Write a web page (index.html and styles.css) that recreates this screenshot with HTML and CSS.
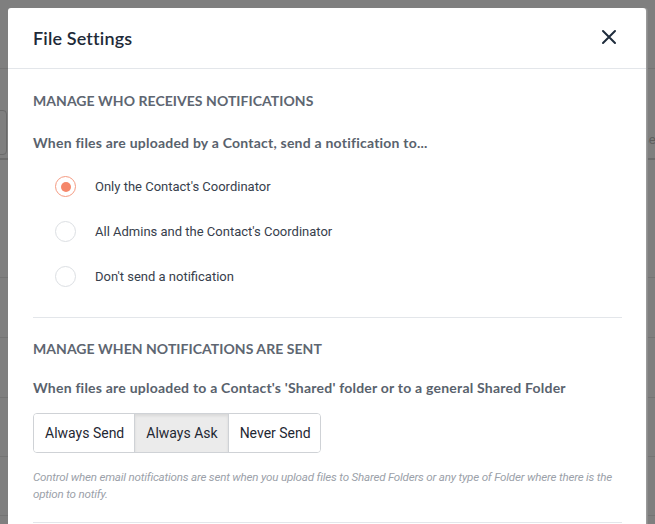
FILE: index.html
```html
<!DOCTYPE html>
<html>
<head>
<meta charset="utf-8">
<link rel="stylesheet" href="styles.css">
</head>
<body>
<div class="backdrop">
  <div class="bg-page">
    <div class="bg-line l1"></div>
    <div class="bg-input"></div>
    <div class="bg-search">Search</div>
    <div class="bg-line l2"></div>
    <div class="bg-line l3"></div>
    <div class="bg-line l4"></div>
    <div class="bg-line l5"></div>
    <div class="bg-line l6"></div>
    <div class="bg-line l7"></div>
  </div>
  <div class="modal">
    <div class="modal-header">
      <h2 class="modal-title">File Settings</h2>
      <button class="close" aria-label="Close">
        <svg width="16" height="16" viewBox="0 0 16 16"><path d="M2 2 L14 14 M14 2 L2 14" stroke="#1f2c3c" stroke-width="2" stroke-linecap="round"/></svg>
      </button>
    </div>
    <div class="modal-body">
      <section class="section">
        <h3 class="section-title">Manage who receives notifications</h3>
        <p class="question">When files are uploaded by a Contact, send a notification to...</p>
        <div class="radios">
          <label class="radio"><span class="dot checked"></span><span>Only the Contact's Coordinator</span></label>
          <label class="radio"><span class="dot"></span><span>All Admins and the Contact's Coordinator</span></label>
          <label class="radio"><span class="dot"></span><span>Don't send a notification</span></label>
        </div>
      </section>
      <section class="section second">
        <h3 class="section-title">Manage when notifications are sent</h3>
        <p class="question">When files are uploaded to a Contact's 'Shared' folder or to a general Shared Folder</p>
        <div class="btn-group">
          <button class="btn">Always Send</button>
          <button class="btn active">Always Ask</button>
          <button class="btn">Never Send</button>
        </div>
        <p class="help">Control when email notifications are sent when you upload files to Shared Folders or any type of Folder where there is the option to notify.</p>
      </section>
    </div>
  </div>
</div>
</body>
</html>
```
FILE: styles.css
```css
* { box-sizing: border-box; }
html, body { margin: 0; padding: 0; height: 100%; overflow: hidden; }
body { font-family: "Open Sans", "Noto Sans", sans-serif; background: #808080; }

.backdrop {
  position: relative;
  width: 655px;
  height: 524px;
  background: #7f7f7f;
  padding: 8px 9px 0 8px;
}
.bg-page { position: absolute; inset: 0; pointer-events: none; }
.bg-line { position: absolute; left: 0; right: 0; height: 1px; background: #747474; }
.bg-line.l1 { top: 68px; }
.bg-line.l2 { top: 158px; height: 2px; background: #6c6c6c; }
.bg-line.l3 { top: 277px; }
.bg-line.l4 { top: 337px; }
.bg-line.l5 { top: 397px; }
.bg-line.l6 { top: 456px; }
.bg-line.l7 { top: 515px; }
.bg-input { position: absolute; left: -10px; top: 110px; width: 17px; height: 45px; border: 1px solid #6a6a6a; border-radius: 4px; }
.bg-search { position: absolute; left: 640px; top: 132px; font: 13px "Liberation Sans", sans-serif; color: #5d5d5d; }

.modal {
  position: relative;
  background: #fff;
  border-radius: 3px 3px 0 0;
  height: 100%;
  box-shadow: 1px 0 0 #9a9a9a, 2px 0 0 #8c8c8c;
}
.modal-header {
  height: 61px;
  border-bottom: 1px solid #e3e6ea;
  display: flex;
  align-items: center;
  justify-content: space-between;
  padding: 0 29px 0 25px;
}
.modal-title {
  margin: 0;
  font-family: "Lato", sans-serif;
  font-size: 18px;
  font-weight: 600;
  color: #1e2a38;
  padding-top: 0;
  letter-spacing: 0.15px;
}
.close { border: 0; background: none; padding: 0; width: 16px; height: 16px; display: flex; margin-top: -2px; }

.modal-body { padding: 0 24px 0 25px; }
.section { padding-top: 24px; }
.section.second {
  border-top: 1px solid #e3e6ea;
  margin-top: 30px;
  padding-top: 23px;
  border-bottom: 1px solid #e3e6ea;
  padding-bottom: 19px;
}
.section-title {
  margin: 0;
  font-family: "Lato", sans-serif;
  font-size: 14px;
  font-weight: 700;
  text-transform: uppercase;
  color: #5e6671;
  line-height: 16px;
  letter-spacing: 0.05px;
}
.question {
  margin: 26px 0 0;
  font-family: "Lato", sans-serif;
  font-size: 14px;
  font-weight: 700;
  color: #59626d;
  line-height: 16px;
  letter-spacing: 0.22px;
}
.radios { display: flex; flex-direction: column; gap: 24px; margin-top: 25px; padding-left: 22px; }
.radio {
  display: flex;
  align-items: center;
  font-family: "Roboto", sans-serif;
  font-size: 13px;
  color: #37404c;
  height: 21px;
}
.dot {
  width: 21px; height: 21px;
  border-radius: 50%;
  border: 1px solid #dcdfe3;
  background: #fff;
  flex: none;
  position: relative;
}
.dot.checked { border-color: #f59b82; }
.dot.checked::after {
  content: "";
  position: absolute;
  left: 4.5px; top: 4.5px;
  width: 10px; height: 10px;
  border-radius: 50%;
  background: #f5876a;
}
.radio span:last-child { margin-left: 19px; }

.section.second .question { margin-top: 23px; }
.btn-group {
  display: inline-flex;
  margin-top: 17px;
  border: 1px solid #cfd2d6;
  border-radius: 4px;
  overflow: hidden;
}
.btn {
  font-family: "Roboto", sans-serif;
  font-size: 14px;
  color: #1f2833;
  background: #fff;
  border: 0;
  height: 38px;
  padding: 0 10px 0 11px;
}
.btn + .btn { border-left: 1px solid #cfd2d6; }
.btn:last-child { padding-right: 9px; }
.btn.active { background: #ebebeb; box-shadow: inset 0 2px 3px rgba(0,0,0,0.08); }
.help {
  margin: 16px 0 0;
  font-family: "Roboto", sans-serif;
  font-style: italic;
  font-size: 11.6px;
  line-height: 17px;
  color: #9ba1a9;
  letter-spacing: -0.2px;
}
```
